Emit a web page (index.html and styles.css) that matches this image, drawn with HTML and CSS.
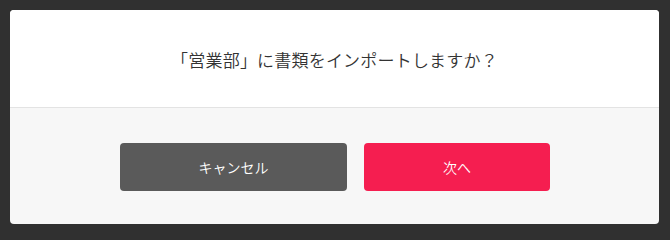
FILE: index.html
```html
<!DOCTYPE html>
<html lang="ja">
<head>
<meta charset="utf-8">
<link rel="stylesheet" href="styles.css">
</head>
<body>
<div class="dialog">
  <div class="dialog-body">
    <p class="message">「営業部」に書類をインポートしますか？</p>
  </div>
  <div class="dialog-footer">
    <button class="btn btn-cancel">キャンセル</button>
    <button class="btn btn-next">次へ</button>
  </div>
</div>
</body>
</html>
```
FILE: styles.css
```css
html, body {
  margin: 0;
  padding: 0;
  background: #303030;
}
body {
  padding: 10px 11px 11px 10px;
  font-family: "Noto Sans CJK JP", "Noto Sans", sans-serif;
}
.dialog {
  background: #f7f7f7;
  border-radius: 4px;
  overflow: hidden;
  height: 214px;
  display: flex;
  flex-direction: column;
}
.dialog-body {
  background: #ffffff;
  height: 97px;
  border-bottom: 1px solid #e3e3e3;
  display: flex;
  align-items: center;
  justify-content: center;
}
.message {
  margin: 0;
  padding-top: 2px;
  font-size: 17px;
  font-weight: 350;
  color: #333333;
  letter-spacing: 0.2px;
}
.dialog-footer {
  flex: 1;
  display: flex;
  justify-content: center;
  align-items: flex-start;
  gap: 17px;
  padding-top: 35px;
  padding-left: 1px;
}
.btn {
  height: 48px;
  border: none;
  border-radius: 4px;
  color: #ffffff;
  font-family: "Noto Sans CJK JP", "Noto Sans", sans-serif;
  font-size: 14px;
  font-weight: 350;
  padding: 0;
}
.btn-cancel {
  width: 227px;
  background: #5a5a5a;
}
.btn-next {
  width: 186px;
  background: #f51e50;
}
```
